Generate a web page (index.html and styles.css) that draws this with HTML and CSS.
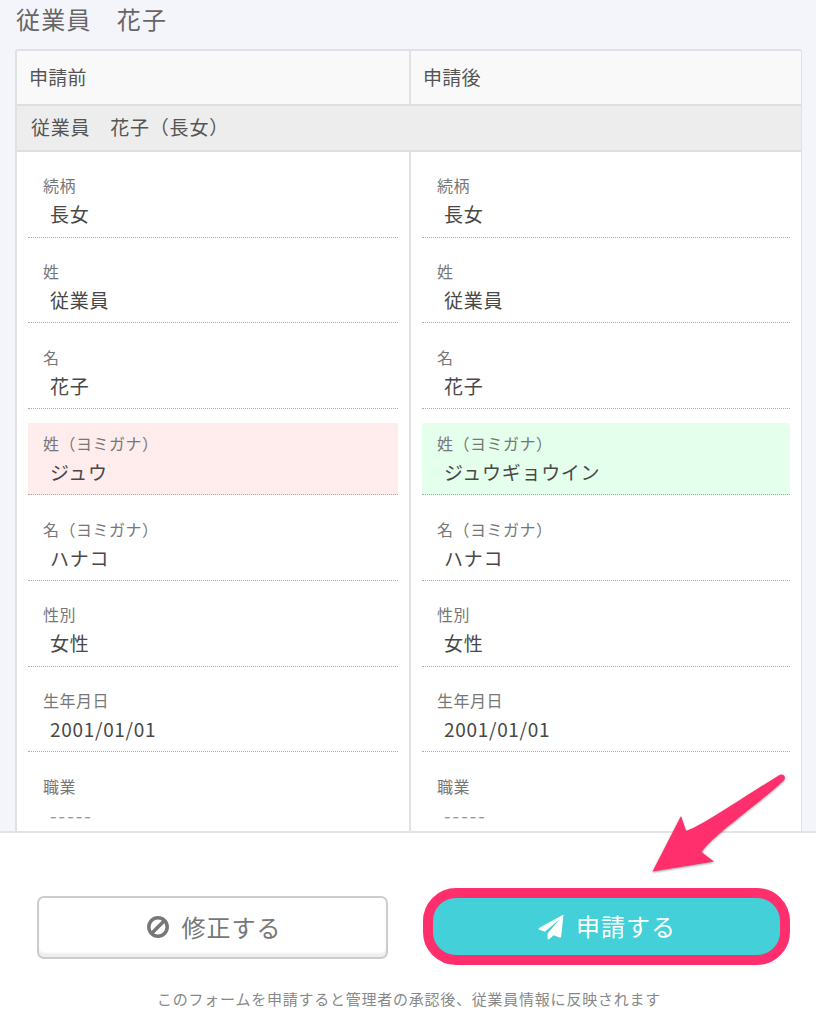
FILE: index.html
```html
<!DOCTYPE html>
<html lang="ja">
<head>
<meta charset="utf-8">
<title>申請内容の確認</title>
<link rel="stylesheet" href="styles.css">
</head>
<body>
<main class="content">
  <h1 class="title">従業員　花子</h1>
  <section class="table">
    <div class="head"><div class="th">申請前</div><div class="th">申請後</div></div>
    <div class="group">従業員　花子（長女）</div>
    <div class="columns">
      <dl class="col">
        <div class="item"><dt>続柄</dt><dd>長女</dd></div>
        <div class="item"><dt>姓</dt><dd>従業員</dd></div>
        <div class="item"><dt>名</dt><dd>花子</dd></div>
        <div class="item removed"><dt>姓（ヨミガナ）</dt><dd>ジュウ</dd></div>
        <div class="item"><dt>名（ヨミガナ）</dt><dd>ハナコ</dd></div>
        <div class="item"><dt>性別</dt><dd>女性</dd></div>
        <div class="item"><dt>生年月日</dt><dd>2001/01/01</dd></div>
        <div class="item"><dt>職業</dt><dd class="empty">-----</dd></div>
      </dl>
      <dl class="col">
        <div class="item"><dt>続柄</dt><dd>長女</dd></div>
        <div class="item"><dt>姓</dt><dd>従業員</dd></div>
        <div class="item"><dt>名</dt><dd>花子</dd></div>
        <div class="item added"><dt>姓（ヨミガナ）</dt><dd>ジュウギョウイン</dd></div>
        <div class="item"><dt>名（ヨミガナ）</dt><dd>ハナコ</dd></div>
        <div class="item"><dt>性別</dt><dd>女性</dd></div>
        <div class="item"><dt>生年月日</dt><dd>2001/01/01</dd></div>
        <div class="item"><dt>職業</dt><dd class="empty">-----</dd></div>
      </dl>
    </div>
  </section>
</main>
<footer class="footer">
  <div class="actions">
    <button class="btn edit">
      <svg class="ban" viewBox="0 0 22 22"><circle cx="11" cy="11" r="9.2"/><path d="M4.8 17.2 17.2 4.8"/></svg>
      <span>修正する</span>
    </button>
    <button class="btn submit">
      <svg class="plane" viewBox="0 0 26 26"><path d="M25.5.4 23.2 22.6Q23 24 21.7 23.4L15.6 21.2 11.2 25.3Q9.6 26 9.6 24.4V19.5L21.6 5.2 6.8 17.8 1.2 15.7Q-.2 14.9 1.1 14.1Z"/></svg>
      <span>申請する</span>
    </button>
  </div>
  <p class="note">このフォームを申請すると管理者の承認後、従業員情報に反映されます</p>
  <svg class="arrow" viewBox="0 0 140 110"><path d="M3.5 100.5 32 45 37 59.7C50 57 91 28 130.5 4C134 2 138 6 134.7 9.5C112 31 64 64 52.5 81L65 90.5Z"/></svg>
</footer>
</body>
</html>
```
FILE: styles.css
```css
* { box-sizing: border-box; }
body {
  margin: 0;
  height: 1024px;
  overflow: hidden;
  display: flex;
  flex-direction: column;
  background: #f4f5fa;
  color: #555;
  font-family: "Noto Sans CJK JP", sans-serif;
}
.content { height: 831px; flex: none; overflow: hidden; padding: 0 14px 0 15px; }
.title {
  margin: 0;
  height: 49px;
  padding-left: 1px;
  line-height: 38px;
  font-size: 24px;
  font-weight: 400;
  letter-spacing: 1.2px;
  color: #666;
}
.table {
  border: 2px solid #e0e1e2;
  border-right-width: 1px;
  border-radius: 3px 3px 0 0;
  background: #fff;
  font-size: 19px;
  letter-spacing: .3px;
}
.head, .columns { display: grid; grid-template-columns: 392px 1fr; }
.head { height: 53px; background: #f9f9f9; }
.th { padding-left: 12px; line-height: 52px; }
.th + .th, .col + .col { border-left: 2px solid #e2e2e2; }
.group {
  height: 48px;
  padding-left: 14px;
  border: solid #dfdfdf;
  border-width: 2px 0;
  background: #ededed;
  line-height: 42px;
  letter-spacing: .8px;
}
.col { margin: 0; padding: 14px 11px 0; }
.item {
  height: 71.6px;
  margin-bottom: 14.2px;
  padding: 7.4px 15px 0;
  border-bottom: 1px dotted #aaa;
}
.item dt { line-height: 25px; font-size: 16px; letter-spacing: .5px; color: #777; }
.item dd { margin: 0; padding-left: 7px; line-height: 32px; letter-spacing: .7px; color: #484848; }
.item .empty { color: #999; letter-spacing: 2px; }
.removed { background: #ffeded; }
.added { background: #e4ffeb; }
.footer {
  position: relative;
  flex: 1;
  padding: 55px 26px 0 37px;
  border-top: 2px solid #e3e3e5;
  background: #fff;
}
.actions { display: flex; justify-content: space-between; align-items: center; height: 77px; }
.btn {
  display: flex;
  align-items: center;
  justify-content: center;
  padding: 0 0 1px;
  font: 400 24px/36px "Noto Sans CJK JP", sans-serif;
  letter-spacing: 1px;
}
.edit {
  width: 351px;
  height: 63px;
  margin-top: 2px;
  gap: 13px;
  padding: 0 0 2px 3px;
  border: 2px solid #ccc;
  border-radius: 7px;
  background: #fff;
  box-shadow: inset 0 -4px 2px #eee;
  color: #777;
}
.submit {
  width: 367px;
  height: 77px;
  gap: 12px;
  padding-left: 1px;
  border: 10px solid #ff2e6c;
  border-radius: 33px;
  background: #43d0d8;
  color: #fff;
}
.ban { width: 22px; height: 22px; margin-top: 1px; fill: none; stroke: #777; stroke-width: 3.5; }
.plane { width: 26px; height: 26px; margin-top: 2px; fill: #fff; }
.note {
  margin: 22px 0 0;
  padding-right: 9px;
  text-align: center;
  font-size: 15px;
  line-height: 24px;
  letter-spacing: .76px;
  color: #888;
}
.arrow {
  position: absolute;
  left: 649px;
  top: -62px;
  width: 140px;
  height: 110px;
  fill: #ff2e6c;
  filter: drop-shadow(0 1px 1px #0006);
}
```
